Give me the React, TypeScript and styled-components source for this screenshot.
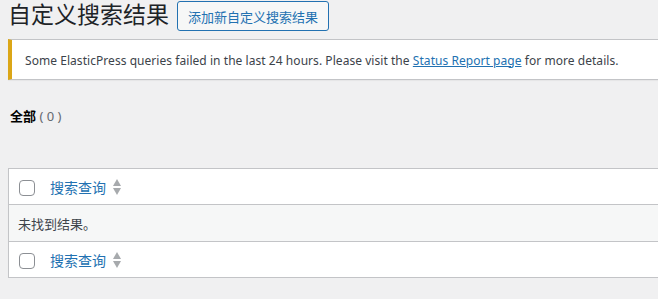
import React from 'react';
import styled, { createGlobalStyle } from 'styled-components';

const GlobalStyle = createGlobalStyle`
  html, body {
    margin: 0;
    padding: 0;
    background: #f0f0f1;
    overflow: hidden;
  }
  body {
    font-family: "Noto Sans", "Noto Sans CJK SC", sans-serif;
    font-size: 13px;
    color: #3c434a;
  }
`;

const Wrap = styled.div`
  width: 720px;
  padding-left: 8px;
`;

const Header = styled.div`
  display: flex;
  align-items: flex-start;
  gap: 8px;
  height: 31px;
`;

const Title = styled.h1`
  margin: 0;
  font-size: 23px;
  font-weight: 400;
  line-height: 29px;
  color: #1d2327;
`;

const ActionButton = styled.a`
  display: inline-flex;
  align-items: center;
  box-sizing: border-box;
  margin-top: 1px;
  height: 30px;
  padding: 0 10px;
  border: 1px solid #2271b1;
  border-radius: 3px;
  background: #f6f7f7;
  color: #2271b1;
  font-size: 13px;
  text-decoration: none;
  cursor: pointer;
`;

const Notice = styled.div`
  display: flex;
  align-items: center;
  box-sizing: border-box;
  margin-top: 8px;
  height: 41px;
  padding: 1px 12px 0 13px;
  background: #fff;
  border: 1px solid #c3c4c7;
  border-left: 4px solid #dba617;
  box-shadow: 0 1px 1px rgba(0, 0, 0, 0.04);
  color: #3c434a;
  font-size: 12px;
  letter-spacing: 0.05px;
`;

const Link = styled.a`
  color: #2271b1;
  text-decoration: underline;
`;

const SubNav = styled.div`
  margin-top: 22px;
  padding-left: 2px;
  line-height: 28px;
`;

const Current = styled.span`
  color: #000;
  font-weight: 600;
`;

const Count = styled.span`
  color: #646970;
  font-weight: 400;
  white-space: pre;
`;

const Table = styled.table`
  margin-top: 38px;
  width: 100%;
  border-collapse: collapse;
  background: #fff;
  border: 1px solid #c3c4c7;
  box-shadow: 0 1px 1px rgba(0, 0, 0, 0.04);
`;

const Row = styled.tr<{ $shade?: boolean }>`
  background: ${p => (p.$shade ? '#f6f7f7' : '#fff')};
  border-bottom: 1px solid #c3c4c7;
  &:last-child {
    border-bottom: none;
  }
`;

const CheckCell = styled.td`
  width: 31px;
  height: 35px;
  padding: 0 0 0 10px;
  vertical-align: middle;
`;

const HeadCell = styled.th`
  padding: 0;
  text-align: left;
  font-weight: 400;
  font-size: 14px;
  vertical-align: middle;
`;

const Sort = styled.a`
  display: inline-flex;
  align-items: center;
  gap: 6px;
  color: #2271b1;
  text-decoration: none;
`;

const EmptyCell = styled.td`
  height: 36px;
  padding: 0 9px;
  vertical-align: middle;
`;

const Checkbox = styled.span`
  display: block;
  box-sizing: border-box;
  width: 16px;
  height: 16px;
  margin-top: 2px;
  border: 1px solid #8c8f94;
  border-radius: 4px;
  background: #fff;
`;

const SortIcon = () => (
  <svg width="10" height="18" viewBox="0 0 10 18">
    <path d="M5 1 L9 8 L1 8 Z" fill="#a7aaad" />
    <path d="M1 10 L9 10 L5 17 Z" fill="#a7aaad" />
  </svg>
);

const ColumnRow = () => (
  <Row>
    <CheckCell>
      <Checkbox />
    </CheckCell>
    <HeadCell>
      <Sort>
        搜索查询
        <SortIcon />
      </Sort>
    </HeadCell>
  </Row>
);

export default function App() {
  return (
    <>
      <GlobalStyle />
      <Wrap>
        <Header>
          <Title>自定义搜索结果</Title>
          <ActionButton>添加新自定义搜索结果</ActionButton>
        </Header>
        <Notice>
          <span>
            Some ElasticPress queries failed in the last 24 hours. Please visit the{' '}
            <Link>Status Report page</Link> for more details.
          </span>
        </Notice>
        <SubNav>
          <Current>全部</Current>
          <Count> ( 0 )</Count>
        </SubNav>
        <Table>
          <tbody>
            <ColumnRow />
            <Row $shade>
              <EmptyCell colSpan={2}>未找到结果。</EmptyCell>
            </Row>
            <ColumnRow />
          </tbody>
        </Table>
      </Wrap>
    </>
  );
}
